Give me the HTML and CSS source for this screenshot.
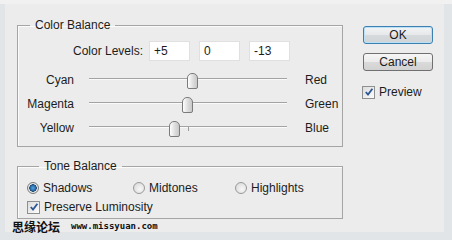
FILE: index.html
```html
<!DOCTYPE html>
<html lang="en">
  <head>
    <meta charset="UTF-8" />
    <title>Color Balance</title>
    <link rel="stylesheet" href="styles.css">
  </head>
  <body>
    <div class="frame">
      <div class="dialog">
        <div class="main">
          <fieldset class="group color-group">
            <legend>Color Balance</legend>
            <div class="levels">
              <label class="levels-label">Color Levels:</label>
              <input class="level" type="text" value="+5" />
              <input class="level" type="text" value="0" />
              <input class="level" type="text" value="-13" />
            </div>
            <div class="slider-row">
              <span class="side-left">Cyan</span>
              <div class="track">
                <span class="tick"></span>
                <span class="thumb" style="left: 98px"></span>
              </div>
              <span class="side-right">Red</span>
            </div>
            <div class="slider-row">
              <span class="side-left">Magenta</span>
              <div class="track">
                <span class="tick"></span>
                <span class="thumb" style="left: 93px"></span>
              </div>
              <span class="side-right">Green</span>
            </div>
            <div class="slider-row">
              <span class="side-left">Yellow</span>
              <div class="track">
                <span class="tick"></span>
                <span class="thumb" style="left: 80px"></span>
              </div>
              <span class="side-right">Blue</span>
            </div>
          </fieldset>

          <fieldset class="group tone-group">
            <legend>Tone Balance</legend>
            <div class="radio-row">
              <label class="option opt-shadows"><span class="radio checked"></span>Shadows</label>
              <label class="option opt-midtones"><span class="radio"></span>Midtones</label>
              <label class="option"><span class="radio"></span>Highlights</label>
            </div>
            <label class="check-row">
              <span class="checkbox">
                <svg width="10" height="10" viewBox="0 0 10 10"><path d="M1.8 5 L4 7.6 L8.4 1.8" fill="none" stroke="#2b5796" stroke-width="1.8" /></svg>
              </span>
              Preserve Luminosity
            </label>
          </fieldset>

          <div class="watermark">
            <span class="wm-cn">思缘论坛</span>
            <span class="wm-url">www.missyuan.com</span>
          </div>
        </div>

        <div class="side-col">
          <button class="btn btn-default">OK</button>
          <button class="btn">Cancel</button>
          <label class="check-row preview">
            <span class="checkbox">
              <svg width="10" height="10" viewBox="0 0 10 10"><path d="M1.8 5 L4 7.6 L8.4 1.8" fill="none" stroke="#2b5796" stroke-width="1.8" /></svg>
            </span>
            Preview
          </label>
        </div>
      </div>
    </div>
  </body>
</html>
```

FILE: styles.css
```css
/* Window frame */
html,
body {
  margin: 0;
  height: 100%;
  background-color: #e2e5e8;
}

body {
  font-family: "Liberation Sans", Arial, sans-serif;
  font-size: 12px;
  color: #1c1c1c;
}

.frame {
  height: 240px;
  border-top: 4px solid #f1f1f1;
  box-sizing: border-box;
  padding-left: 5px;
}

.dialog {
  display: flex;
  width: 439px;
  height: 228px;
  background-color: #ececec;
  padding: 14px 0 0 12px;
  box-sizing: border-box;
}

/* Left column with the two groups */
.main {
  width: 326px;
}

.group {
  margin: 0;
  padding: 0;
  border: 1px solid #a5a5a5;
  box-shadow: inset 1px 1px 0 #fbfbfb;
}

.group legend {
  margin-left: 12px;
  padding: 0 5px;
  line-height: 14px;
}

.color-group {
  padding: 9px 0 6px 0;
}

.tone-group {
  margin-top: 12px;
  padding: 7px 0 3px 9px;
}

/* Color levels */
.levels {
  display: flex;
  align-items: center;
  height: 20px;
}

.levels-label {
  width: 125px;
  text-align: right;
  margin-right: 6px;
}

.level {
  width: 41px;
  height: 20px;
  box-sizing: border-box;
  border: 1px solid #e0e0e0;
  background: #fff;
  padding: 0 4px;
  margin-right: 9px;
  font-family: inherit;
  font-size: 12px;
  color: #1c1c1c;
  outline: none;
}

/* Slider rows */
.slider-row {
  display: flex;
  align-items: center;
  height: 24px;
}

.levels + .slider-row {
  margin-top: 7px;
}

.side-left {
  width: 56px;
  text-align: right;
}

.side-right {
  margin-left: 18px;
}

.track {
  position: relative;
  width: 198px;
  height: 0;
  margin-left: 15px;
  margin-top: -3px;
  border-top: 1px solid #a3a3a3;
  border-bottom: 1px solid #fafafa;
}

.tick {
  position: absolute;
  left: 99px;
  top: 0;
  width: 1px;
  height: 4px;
  background: #9c9c9c;
}

.thumb {
  position: absolute;
  top: -6px;
  width: 9px;
  height: 14px;
  border: 1px solid #7b7b7b;
  border-radius: 5px 5px 2px 2px;
  background: linear-gradient(to right, #fefefe, #dadada 60%, #c9c9c9);
}

/* Tone balance */
.radio-row {
  display: flex;
  align-items: center;
  height: 16px;
}

.option {
  display: flex;
  align-items: center;
}

.opt-shadows {
  width: 106px;
}

.opt-midtones {
  width: 102px;
}

.radio {
  width: 10px;
  height: 10px;
  border: 1px solid #9a9a9a;
  border-radius: 50%;
  margin-right: 4px;
  background: radial-gradient(circle at 60% 60%, #f8f8f8, #d4d4d4);
}

.radio.checked {
  border-color: #7c7c7c;
  background: radial-gradient(circle, #5aa2df 0, #2a6fae 2.5px, #18446f 3.5px, #f2f2f2 4px, #dcdcdc 5px);
}

.check-row {
  display: flex;
  align-items: center;
  height: 16px;
  margin-top: 3px;
}

.checkbox {
  display: flex;
  align-items: center;
  justify-content: center;
  width: 11px;
  height: 11px;
  border: 1px solid #8e8f8f;
  margin-right: 4px;
  background: linear-gradient(135deg, #dcdcdc, #fdfdfd);
}

/* Watermark */
.watermark {
  display: flex;
  align-items: center;
  height: 14px;
  margin-left: -5px;
}

.wm-cn {
  font-family: "Noto Sans CJK SC", sans-serif;
  font-weight: bold;
  font-size: 12px;
  color: #111;
}

.wm-url {
  margin-left: 11px;
  font-family: "DejaVu Sans Mono", monospace;
  font-weight: bold;
  font-size: 9px;
  color: #111;
}

/* Right column */
.side-col {
  display: flex;
  flex-direction: column;
  margin-left: 20px;
  padding-top: 8px;
}

.btn {
  width: 70px;
  height: 18px;
  padding: 0;
  border: 1px solid #707070;
  border-radius: 3px;
  background: linear-gradient(#f6f6f6, #ebebeb 50%, #dadada 51%, #d2d2d2);
  font-family: inherit;
  font-size: 12px;
  color: #1c1c1c;
}

.btn + .btn {
  margin-top: 9px;
}

.btn-default {
  border-color: #3c7fb1;
  box-shadow: inset 0 0 0 1px #b9e0f4;
  background: linear-gradient(#f2f4f5, #e6e8ea 50%, #d6dadd 51%, #d0d4d7);
}

.preview {
  margin-top: 13px;
  margin-left: -1px;
}
```
